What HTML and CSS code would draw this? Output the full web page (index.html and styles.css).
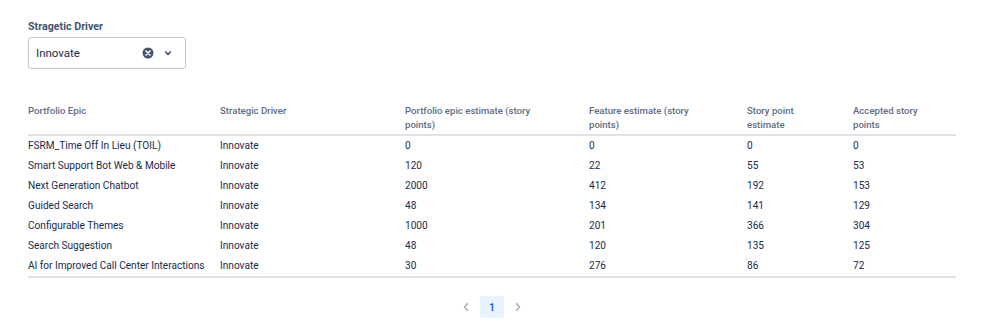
FILE: index.html
```html
<!DOCTYPE html>
<html>
<head>
<meta charset="utf-8">
<link rel="stylesheet" href="styles.css">
</head>
<body>
<div class="page">
  <div class="field">
    <label class="field-label">Stragetic Driver</label>
    <div class="select">
      <span class="select-value">Innovate</span>
      <span class="select-icons">
        <svg class="clear" width="12" height="12" viewBox="0 0 12 12"><circle cx="6" cy="6" r="5.5" fill="#44546f"/><path d="M4 4l4 4M8 4l-4 4" stroke="#fff" stroke-width="1.6" stroke-linecap="round"/></svg>
        <svg class="chev" width="10" height="10" viewBox="0 0 10 10"><path d="M2.5 4l2.5 2.5L7.5 4" fill="none" stroke="#44546f" stroke-width="1.6" stroke-linecap="round" stroke-linejoin="round"/></svg>
      </span>
    </div>
  </div>

  <table class="grid">
    <colgroup>
      <col class="c1"><col class="c2"><col class="c3"><col class="c4"><col class="c5"><col class="c6">
    </colgroup>
    <thead>
      <tr>
        <th>Portfolio Epic</th>
        <th>Strategic Driver</th>
        <th>Portfolio epic estimate (story points)</th>
        <th>Feature estimate (story points)</th>
        <th>Story point estimate</th>
        <th class="last">Accepted story points</th>
      </tr>
    </thead>
    <tbody>
      <tr><td>FSRM_Time Off In Lieu (TOIL)</td><td>Innovate</td><td>0</td><td>0</td><td>0</td><td>0</td></tr>
      <tr><td>Smart Support Bot Web &amp; Mobile</td><td>Innovate</td><td>120</td><td>22</td><td>55</td><td>53</td></tr>
      <tr><td>Next Generation Chatbot</td><td>Innovate</td><td>2000</td><td>412</td><td>192</td><td>153</td></tr>
      <tr><td>Guided Search</td><td>Innovate</td><td>48</td><td>134</td><td>141</td><td>129</td></tr>
      <tr><td>Configurable Themes</td><td>Innovate</td><td>1000</td><td>201</td><td>366</td><td>304</td></tr>
      <tr><td>Search Suggestion</td><td>Innovate</td><td>48</td><td>120</td><td>135</td><td>125</td></tr>
      <tr><td>AI for Improved Call Center Interactions</td><td>Innovate</td><td>30</td><td>276</td><td>86</td><td>72</td></tr>
    </tbody>
  </table>

  <nav class="pager">
    <span class="pager-arrow"><svg width="10" height="12" viewBox="0 0 10 12"><path d="M6.5 2.5L3.5 6l3 3.5" fill="none" stroke="#a5adba" stroke-width="1.5" stroke-linecap="round" stroke-linejoin="round"/></svg></span>
    <span class="pager-page">1</span>
    <span class="pager-arrow"><svg width="10" height="12" viewBox="0 0 10 12"><path d="M3.5 2.5L6.5 6l-3 3.5" fill="none" stroke="#a5adba" stroke-width="1.5" stroke-linecap="round" stroke-linejoin="round"/></svg></span>
  </nav>
</div>
</body>
</html>
```

FILE: styles.css
```css
* { box-sizing: border-box; }
html, body { margin: 0; background: #fff; }
body {
  font-family: Roboto, "Noto Sans", "Liberation Sans", sans-serif;
  color: #172b4d;
  font-size: 10px;
}
.page {
  padding: 21px 28px 0 28px;
}
.field { display: flex; flex-direction: column; gap: 4px; }
.field-label {
  font-size: 10.7px;
  font-weight: 700;
  color: #44546f;
  line-height: 12px;
}
.select {
  width: 158px;
  height: 32px;
  border: 1px solid #c1c7d0;
  border-radius: 3px;
  display: flex;
  align-items: center;
  justify-content: space-between;
  padding: 0 12px 0 7px;
}
.select-value { font-size: 11.5px; color: #172b4d; }
.select-icons { display: flex; align-items: center; gap: 9px; }
.select-icons svg { display: block; }

.grid {
  margin-top: 29px;
  width: 928px;
  table-layout: fixed;
  border-collapse: collapse;
  border-bottom: 2px solid #dfe1e6;
}
.c1 { width: 192px; }
.c2 { width: 185px; }
.c3 { width: 184px; }
.c4 { width: 158px; }
.c5 { width: 106px; }
.c6 { width: 103px; }
.grid th {
  text-align: left;
  vertical-align: top;
  font-weight: 500;
  color: #5e6c84;
  font-size: 9.6px;
  line-height: 14px;
  padding: 6px 40px 2px 0;
  border-bottom: 2px solid #dfe1e6;
}
.grid th.last { padding-right: 20px; }
.grid td {
  height: 20px;
  line-height: 20px;
  padding: 0;
  font-size: 10.1px;
  white-space: nowrap;
}

.pager {
  width: 928px;
  display: flex;
  justify-content: center;
  align-items: center;
  gap: 4px;
  margin-top: 18px;
}
.pager-arrow { width: 20px; height: 22px; display: flex; align-items: center; justify-content: center; }
.pager-arrow svg { display: block; }
.pager-page {
  width: 24px;
  height: 22px;
  border-radius: 3px;
  background: #e9f2ff;
  color: #0c66e4;
  font-weight: 600;
  font-size: 10.5px;
  display: flex;
  align-items: center;
  justify-content: center;
}
```
